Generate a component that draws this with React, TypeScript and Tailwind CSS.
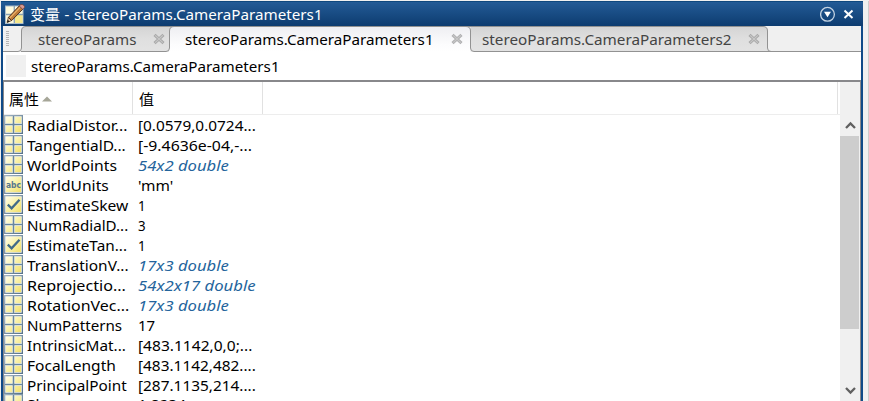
import React from 'react';

type Kind = 'grid' | 'abc' | 'check';

interface Row {
  kind: Kind;
  name: string;
  value: string;
  link?: boolean;
  nw: number;
  vw: number;
}

const rows: Row[] = [
  { kind: 'grid', name: 'RadialDistor...', value: '[0.0579,0.0724...', nw: 100, vw: 118 },
  { kind: 'grid', name: 'TangentialD...', value: '[-9.4636e-04,-...', nw: 99, vw: 114 },
  { kind: 'grid', name: 'WorldPoints', value: '54x2 double', link: true, nw: 90, vw: 91 },
  { kind: 'abc', name: 'WorldUnits', value: "'mm'", nw: 82, vw: 35 },
  { kind: 'check', name: 'EstimateSkew', value: '1', nw: 101, vw: 8 },
  { kind: 'grid', name: 'NumRadialD...', value: '3', nw: 101, vw: 8 },
  { kind: 'check', name: 'EstimateTan...', value: '1', nw: 100, vw: 8 },
  { kind: 'grid', name: 'TranslationV...', value: '17x3 double', link: true, nw: 102, vw: 91 },
  { kind: 'grid', name: 'Reprojectio...', value: '54x2x17 double', link: true, nw: 99, vw: 118 },
  { kind: 'grid', name: 'RotationVec...', value: '17x3 double', link: true, nw: 102, vw: 91 },
  { kind: 'grid', name: 'NumPatterns', value: '17', nw: 95, vw: 17 },
  { kind: 'grid', name: 'IntrinsicMat...', value: '[483.1142,0,0;...', nw: 99, vw: 114 },
  { kind: 'grid', name: 'FocalLength', value: '[483.1142,482....', nw: 89, vw: 118 },
  { kind: 'grid', name: 'PrincipalPoint', value: '[287.1135,214....', nw: 100, vw: 118 },
  { kind: 'grid', name: 'Skew', value: '1.8234', nw: 37, vw: 48 },
];

/** Text stretched horizontally so its advance equals `width`. */
function Fit({ width, className = '', children }: { width: number; className?: string; children: string }) {
  const ref = React.useRef<HTMLSpanElement>(null);
  const [scale, setScale] = React.useState(1);
  React.useLayoutEffect(() => {
    if (ref.current) setScale(width / ref.current.offsetWidth);
  }, [width]);
  return (
    <span className="block shrink-0" style={{ width }}>
      <span
        ref={ref}
        className={`inline-block origin-left whitespace-nowrap ${className}`}
        style={{ transform: `scaleX(${scale})` }}
      >
        {children}
      </span>
    </span>
  );
}

function CellIcon({ kind }: { kind: Kind }) {
  return (
    <svg width="19" height="20" viewBox="0 0 19 20" className="block shrink-0">
      <defs>
        <linearGradient id="cell" x1="0" y1="0" x2="1" y2="1">
          <stop offset="0" stopColor="#fffde8" />
          <stop offset="0.45" stopColor="#faf3ae" />
          <stop offset="1" stopColor="#f2e06a" />
        </linearGradient>
        <linearGradient id="edge" x1="0" y1="0" x2="1" y2="1">
          <stop offset="0" stopColor="#a3b6c6" />
          <stop offset="1" stopColor="#537087" />
        </linearGradient>
      </defs>
      <rect x="0" y="0" width="19" height="19" fill="url(#edge)" />
      <rect x="1.3" y="1.3" width="16.4" height="16.4" fill="#fffde8" />
      <rect x="2" y="2" width="15" height="15" fill="url(#cell)" />
      {kind === 'grid' && (
        <>
          <path d="M9.5 1.3V17.7M1.3 9.5H17.7" stroke="#fffde8" strokeWidth="2.8" />
          <path d="M9.5 1V18M1 9.5H18" stroke="#68879f" strokeWidth="1.6" />
        </>
      )}
      {kind === 'check' && <path d="M3.8 9.7L7.6 13.3L15.5 4.7" stroke="#416a89" strokeWidth="2.3" fill="none" />}
      {kind === 'abc' && (
        <text x="9.5" y="13" textAnchor="middle" textLength="15" lengthAdjust="spacingAndGlyphs" fontSize="8.5" fontWeight="bold" fill="#55768f" fontFamily="DejaVu Sans, sans-serif">
          abc
        </text>
      )}
    </svg>
  );
}

function CloseX({ light }: { light?: boolean }) {
  return (
    <svg width="12" height="12" viewBox="0 0 12 12" className="block shrink-0">
      <path d="M1.5 1.8L10.5 10.2M10.5 1.8L1.5 10.2" stroke={light ? '#b0b0b2' : '#a9a9a9'} strokeWidth="3" />
      <path d="M2.2 2.4L9.8 9.6M9.8 2.4L2.2 9.6" stroke="#c8c8c8" strokeWidth="1.1" />
    </svg>
  );
}

function TitleIcon() {
  return (
    <svg width="20" height="21" viewBox="0 0 20 21" className="block shrink-0">
      <rect x="0.5" y="2" width="17.5" height="17.5" fill="#fffbdc" stroke="#a9bccb" />
      <path d="M10 11H17.5V19H10Z" fill="#f5e88c" />
      <path d="M9.3 2V19M1 10.5H18" stroke="#8ba2b4" strokeWidth="1.3" />
      <path d="M2 18.5L3.4 13.4L6.6 16.6Z" fill="#e8c79e" stroke="#3b2413" strokeWidth="0.7" />
      <path d="M2 18.5L2.8 15.7L4.8 17.7Z" fill="#1c1714" />
      <path d="M3.4 13.4L14.4 1.8L18 5L6.6 16.6Z" fill="#bf7b38" stroke="#50301a" strokeWidth="1" />
      <path d="M4.9 13.9L15.2 3.2" stroke="#eeb66d" strokeWidth="1.2" />
      <path d="M14.2 2L15.8 0.6Q17.3 0 18.7 1.3T19.3 3.8L17.8 5.4Z" fill="#d99b92" stroke="#6b3a36" strokeWidth="0.7" />
    </svg>
  );
}

export default function App() {
  return (
    <div className="flex h-[401px] w-[869px] overflow-hidden bg-[#f0f0f0] pt-px pl-px font-['Noto_Sans','Noto_Sans_CJK_SC',sans-serif] text-[15px] leading-5 text-black">
      <div className="flex h-[400px] w-[862px] shrink-0 flex-col bg-[#0f4a88]">
        <header className="flex h-[25px] shrink-0 items-center border-t border-[#0f487e] bg-linear-to-b from-[#235b96] to-[#0d3c70] pl-1 text-white">
          <TitleIcon />
          <div className="ml-[5px] flex">
            <Fit width={30}>变量</Fit>
            <span className="w-[14px] text-center">-</span>
            <Fit width={249}>stereoParams.CameraParameters1</Fit>
          </div>
          <svg width="42" height="18" viewBox="0 0 42 18" className="mr-px ml-auto block">
            <circle cx="7.5" cy="9.3" r="6.9" fill="none" stroke="#c3d2e2" strokeWidth="1.3" />
            <path d="M4 6.8H11L7.5 12.2Z" fill="#fff" />
            <path d="M24.5 5.5L32.5 13M32.5 5.5L24.5 13" stroke="#fff" strokeWidth="2" />
          </svg>
        </header>

        <main className="mx-0.5 flex h-[375px] flex-col overflow-hidden bg-white">
          <nav className="relative h-[26px] shrink-0 bg-[#f0f0f0]">
            <svg width="858" height="26" viewBox="0 0 858 26" className="absolute inset-0 block">
              <defs>
                <linearGradient id="tab" x1="0" y1="0" x2="0" y2="1">
                  <stop offset="0" stopColor="#d4d4d4" />
                  <stop offset="0.5" stopColor="#dfdfdf" />
                  <stop offset="1" stopColor="#e3e3e3" />
                </linearGradient>
                <linearGradient id="active" x1="0" y1="0" x2="0" y2="1">
                  <stop offset="0" stopColor="#eeeef2" />
                  <stop offset="0.7" stopColor="#fcfcfd" />
                  <stop offset="1" stopColor="#ffffff" />
                </linearGradient>
              </defs>
              <path d="M3 5.5H6M3 7.5H6M3 9.5H6M3 11.5H6M3 13.5H6M3 15.5H6M3 17.5H6M3 19.5H6" stroke="#b5b5b5" />
              <path d="M15 25.5Q18.5 25.5 18.5 22V5Q18.5 0.5 23 0.5H168V22Q168 25.5 164 25.5Z" fill="url(#tab)" />
              <path d="M166 26V5Q167 0.5 171 0.5H463Q467.5 0.5 467.5 5V26Z" fill="url(#active)" />
              <path d="M467.5 0.5H760Q764.5 0.5 764.5 5V22Q764.5 25.5 768 25.5H471Q467.5 25.5 467.5 22Z" fill="url(#tab)" />
              <path
                d="M0 25.5H15Q18.5 25.5 18.5 22V5Q18.5 0.5 23 0.5H463Q467.5 0.5 467.5 5V22Q467.5 25.5 471 25.5H858M18 25.5H163Q166.5 25.5 166.5 22V5Q166.5 0.5 171 0.5M463 0.5H760Q764.5 0.5 764.5 5V22Q764.5 25.5 768 25.5"
                fill="none"
                stroke="#929292"
              />
            </svg>
            <div className="relative flex h-[26px] items-center text-[#444]">
              <div className="ml-[35px]"><Fit width={99}>stereoParams</Fit></div>
              <div className="ml-4"><CloseX /></div>
              <div className="ml-5 text-black"><Fit width={249}>stereoParams.CameraParameters1</Fit></div>
              <div className="ml-[17px]"><CloseX light /></div>
              <div className="ml-[19px]"><Fit width={250}>stereoParams.CameraParameters2</Fit></div>
              <div className="ml-4"><CloseX /></div>
            </div>
          </nav>

          <div className="flex h-7 shrink-0 items-center pl-[3px]">
            <span className="mr-[5px] h-[22px] w-5 bg-[#f0f0f0]" />
            <Fit width={249}>stereoParams.CameraParameters1</Fit>
          </div>

          <section className="flex h-[321px] shrink-0 border-x border-t-2 border-[#88888b]">
            <div className="flex w-[836px] flex-col">
              <div className="flex h-[33px] shrink-0 border-b border-[#ededed]">
                <div className="flex w-[129px] items-center border-r border-[#e1e1e1] pt-0.5 pl-[5px]">
                  <Fit width={30}>属性</Fit>
                  <svg width="10" height="6" viewBox="0 0 10 6" className="ml-[3px] block"><path d="M0 5.5L5 0.5L10 5.5Z" fill="#a6a698" /></svg>
                </div>
                <div className="flex w-[130px] items-center border-r border-[#e1e1e1] pt-0.5 pl-1.5"><Fit width={15}>值</Fit></div>
                <div className="w-[575px] border-r border-[#e1e1e1]" />
              </div>
              {rows.map((row) => (
                <div key={row.name} className="flex h-5 shrink-0 last:-mt-px">
                  <CellIcon kind={row.kind} />
                  <div className="ml-1 w-[111px] shrink-0"><Fit width={row.nw}>{row.name}</Fit></div>
                  <Fit width={row.vw} className={row.link ? 'text-[#24649c] italic' : ''}>{row.value}</Fit>
                </div>
              ))}
            </div>
            <div className="flex w-5 flex-col bg-[#f0f0f0] pt-[33px]">
              <div className="flex h-[21px] shrink-0 items-center justify-center">
                <svg width="11" height="9" viewBox="0 0 11 9"><path d="M1 7L5.5 2.5L10 7" fill="none" stroke="#606060" strokeWidth="2.3" /></svg>
              </div>
              <div className="h-[193px] w-[19px] shrink-0 bg-[#cdcdcd]" />
              <div className="flex h-[66px] shrink-0 items-end justify-center">
                <svg width="11" height="9" viewBox="0 0 11 9"><path d="M1 2L5.5 6.5L10 2" fill="none" stroke="#606060" strokeWidth="2.3" /></svg>
              </div>
            </div>
          </section>
        </main>
      </div>
      <div className="ml-[5px] w-px bg-[#cdcdcd]" />
    </div>
  );
}
